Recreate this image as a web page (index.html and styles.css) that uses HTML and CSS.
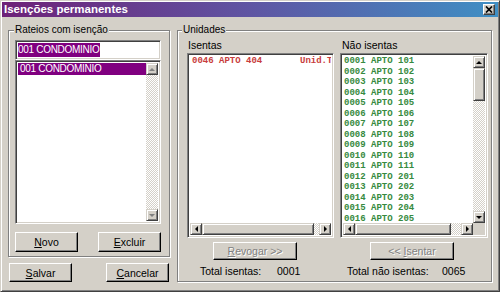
FILE: index.html
```html
<!DOCTYPE html>
<html lang="pt-BR">

<head>
    <meta charset="UTF-8">
    <title>Isenções permanentes</title>
    <link rel="stylesheet" href="styles.css">
</head>

<body>
    <div class="window">

        <div class="titlebar">
            <span class="title">Isenções permanentes</span>
            <span class="close">
                <svg width="8" height="7" viewBox="0 0 8 7">
                    <path d="M1 0.5 L7 6.5 M7 0.5 L1 6.5" stroke="#000" stroke-width="1.7" />
                </svg>
            </span>
        </div>

        <div class="main">

            <!-- coluna da esquerda -->
            <div class="left-col">
                <fieldset class="group rateios">
                    <legend>Rateios com isenção</legend>

                    <div class="textbox"><span class="sel">001 CONDOMINIO</span></div>

                    <div class="listbox rateio-list">
                        <div class="items">
                            <div class="item selected">001 CONDOMINIO</div>
                        </div>
                        <div class="vscroll off">
                            <span class="arrow up"></span>
                            <span class="track"></span>
                            <span class="arrow down"></span>
                        </div>
                    </div>

                    <div class="btn-row inner">
                        <button class="btn"><u>N</u>ovo</button>
                        <button class="btn"><u>E</u>xcluir</button>
                    </div>
                </fieldset>

                <div class="btn-row outer">
                    <button class="btn big"><u>S</u>alvar</button>
                    <button class="btn big"><u>C</u>ancelar</button>
                </div>
            </div>

            <!-- unidades -->
            <fieldset class="group unidades">
                <legend>Unidades</legend>

                <div class="cols">
                    <div class="col col-isentas">
                        <div class="col-label">Isentas</div>
                        <div class="listbox code-list isentas">
                            <div class="items red">
                                <div class="row">0046 APTO 404       Unid.TO</div>
                            </div>
                            <div class="hscroll">
                                <span class="arrow left"></span>
                                <span class="thumb" style="width: 112px"></span>
                                <span class="track"></span>
                                <span class="arrow right"></span>
                            </div>
                        </div>
                        <button class="btn action disabled"><u>R</u>evogar &gt;&gt;</button>
                        <div class="total">
                            <span class="total-label">Total isentas:</span>
                            <span>0001</span>
                        </div>
                    </div>

                    <div class="col col-nao">
                        <div class="col-label">Não isentas</div>
                        <div class="listbox code-list nao-isentas">
                            <div class="items green">
                                <div class="row">0001 APTO 101</div>
                                <div class="row">0002 APTO 102</div>
                                <div class="row">0003 APTO 103</div>
                                <div class="row">0004 APTO 104</div>
                                <div class="row">0005 APTO 105</div>
                                <div class="row">0006 APTO 106</div>
                                <div class="row">0007 APTO 107</div>
                                <div class="row">0008 APTO 108</div>
                                <div class="row">0009 APTO 109</div>
                                <div class="row">0010 APTO 110</div>
                                <div class="row">0011 APTO 111</div>
                                <div class="row">0012 APTO 201</div>
                                <div class="row">0013 APTO 202</div>
                                <div class="row">0014 APTO 203</div>
                                <div class="row">0015 APTO 204</div>
                                <div class="row">0016 APTO 205</div>
                            </div>
                            <div class="vscroll">
                                <span class="arrow up"></span>
                                <span class="thumb" style="height: 33px"></span>
                                <span class="track"></span>
                                <span class="arrow down"></span>
                            </div>
                            <div class="hscroll">
                                <span class="arrow left"></span>
                                <span class="thumb" style="width: 96px"></span>
                                <span class="track"></span>
                                <span class="arrow right"></span>
                            </div>
                            <div class="corner"></div>
                        </div>
                        <button class="btn action disabled">&lt;&lt; <u>I</u>sentar</button>
                        <div class="total">
                            <span class="total-label">Total não isentas:</span>
                            <span>0065</span>
                        </div>
                    </div>
                </div>
            </fieldset>

        </div>
    </div>
</body>

</html>
```

FILE: styles.css
```css
* {
    box-sizing: border-box;
}

body {
    margin: 0;
    background: #d4d0c8;
    font-family: "Liberation Sans", Arial, sans-serif;
    font-size: 10px;
    color: #000;
}

.window {
    width: 500px;
    height: 292px;
    padding: 1px;
    background: #d4d0c8;
    border: 1px solid;
    border-color: #d4d0c8 #404040 #404040 #d4d0c8;
    box-shadow: inset 1px 1px #fff, inset -1px -1px #808080;
    display: flex;
    flex-direction: column;
}

/* barra de titulo */
.titlebar {
    height: 15px;
    padding: 0 3px 0 2px;
    display: flex;
    align-items: center;
    justify-content: space-between;
    background: linear-gradient(to right, #6e2278, #5f55a3 50%, #3f8fc4);
}

.title {
    color: #fff;
    font-weight: bold;
    font-size: 11.5px;
    line-height: 15px;
}

.close {
    width: 12px;
    height: 11px;
    display: flex;
    align-items: center;
    justify-content: center;
    background: #d4d0c8;
    border: 1px solid;
    border-color: #fff #404040 #404040 #fff;
    box-shadow: inset -1px -1px #808080;
}

.main {
    display: flex;
    gap: 7px;
    padding: 7px 6px 0 6px;
}

/* group box */
.group {
    margin: 0;
    min-width: 0;
    border: 1px solid #808080;
    box-shadow: 1px 1px 0 #fff, inset 1px 1px 0 #fff;
}

.group legend {
    padding: 0 1px;
    line-height: 12px;
    background: #d4d0c8;
}

.left-col {
    width: 162px;
    display: flex;
    flex-direction: column;
}

.rateios {
    padding: 4px 8px 4px 6px;
}

.rateios legend {
    margin-left: -1px;
}

/* campos */
.textbox,
.listbox {
    background: #fff;
    border: 1px solid;
    border-color: #808080 #fff #fff #808080;
    box-shadow: inset 1px 1px #404040, inset -1px -1px #d4d0c8;
}

.textbox {
    height: 20px;
    padding: 2px 0 0 2px;
    letter-spacing: -0.3px;
}

.sel {
    display: inline-block;
    background: #800080;
    color: #fff;
    line-height: 14px;
    padding-right: 1px;
}

.listbox {
    display: grid;
    padding: 2px;
    overflow: hidden;
}

.rateio-list {
    height: 164px;
    grid-template-columns: 1fr 12px;
}

.rateio-list .items {
    letter-spacing: -0.3px;
}

.item {
    line-height: 12px;
    padding-left: 2px;
}

.item.selected {
    background: #800080;
    color: #fff;
}

/* barras de rolagem */
.vscroll,
.hscroll {
    display: flex;
    background: repeating-conic-gradient(#fff 0 25%, #d4d0c8 0 50%) 0 0 / 2px 2px;
}

.vscroll {
    flex-direction: column;
}

.track {
    flex: 1;
}

.arrow,
.thumb {
    flex: none;
    background: #d4d0c8;
    border: 1px solid;
    border-color: #d4d0c8 #404040 #404040 #d4d0c8;
    box-shadow: inset 1px 1px #fff, inset -1px -1px #808080;
}

.arrow {
    width: 12px;
    height: 12px;
    display: flex;
    align-items: center;
    justify-content: center;
}

.vscroll .thumb {
    width: 12px;
}

.hscroll .thumb {
    height: 12px;
}

.arrow::before {
    content: "";
    width: 0;
    height: 0;
    border: 3px solid transparent;
}

.arrow.up::before {
    border-bottom-color: #000;
    border-top-width: 0;
}

.arrow.down::before {
    border-top-color: #000;
    border-bottom-width: 0;
}

.arrow.left::before {
    border-right-color: #000;
    border-left-width: 0;
}

.arrow.right::before {
    border-left-color: #000;
    border-right-width: 0;
}

.off .arrow.up::before {
    border-bottom-color: #808080;
}

.off .arrow.down::before {
    border-top-color: #808080;
}

/* botoes */
.btn-row {
    display: flex;
    justify-content: space-between;
}

.btn-row.inner {
    margin-top: 8px;
}

.btn-row.outer {
    margin-top: 6px;
    padding: 0 1px;
}

.btn {
    width: 63px;
    height: 20px;
    padding: 0;
    font-family: inherit;
    font-size: 10.5px;
    color: #000;
    background: #d4d0c8;
    border: 1px solid;
    border-color: #fff #000 #000 #fff;
    box-shadow: inset -1px -1px #808080;
}

.btn.big {
    height: 19px;
}

.btn.disabled {
    color: #808080;
    text-shadow: 1px 1px #fff;
}

/* unidades */
.unidades {
    flex: 1;
    padding: 3px 3px 4px 9px;
}

.unidades legend {
    margin-left: -5px;
}

.cols {
    display: flex;
    gap: 6px;
}

.col {
    display: flex;
    flex-direction: column;
}

.col-isentas {
    width: 147px;
}

.col-nao {
    width: 148px;
}

.col-label {
    line-height: 12px;
    margin-bottom: 2px;
    padding-left: 1px;
    font-size: 10.5px;
}

.col-nao .col-label {
    padding-left: 2px;
}

.code-list {
    height: 185px;
}

.isentas {
    grid-template-rows: 1fr 12px;
}

.nao-isentas {
    grid-template-columns: 1fr 12px;
    grid-template-rows: 1fr 12px;
}

.corner {
    background: #d4d0c8;
}

.items {
    overflow: hidden;
    min-width: 0;
    min-height: 0;
}

.code-list .items {
    font-family: "Liberation Mono", "Courier New", monospace;
    font-size: 9px;
    font-weight: bold;
    line-height: 10.5px;
}

.code-list .row {
    white-space: pre;
}

.items.red {
    color: #c83c3c;
    padding-left: 2px;
}

.items.green {
    color: #368a40;
    padding-left: 1px;
}

.btn.action {
    width: 84px;
    height: 18px;
    margin-top: 4px;
}

.col-isentas .btn.action {
    margin-left: 26px;
}

.col-nao .btn.action {
    margin-left: 30px;
}

.total {
    display: flex;
    margin-top: 5px;
    line-height: 12px;
    font-size: 10.5px;
}

.col-isentas .total {
    padding-left: 13px;
}

.col-isentas .total-label {
    width: 77px;
}

.col-nao .total {
    padding-left: 7px;
}

.col-nao .total-label {
    width: 95px;
}
```
